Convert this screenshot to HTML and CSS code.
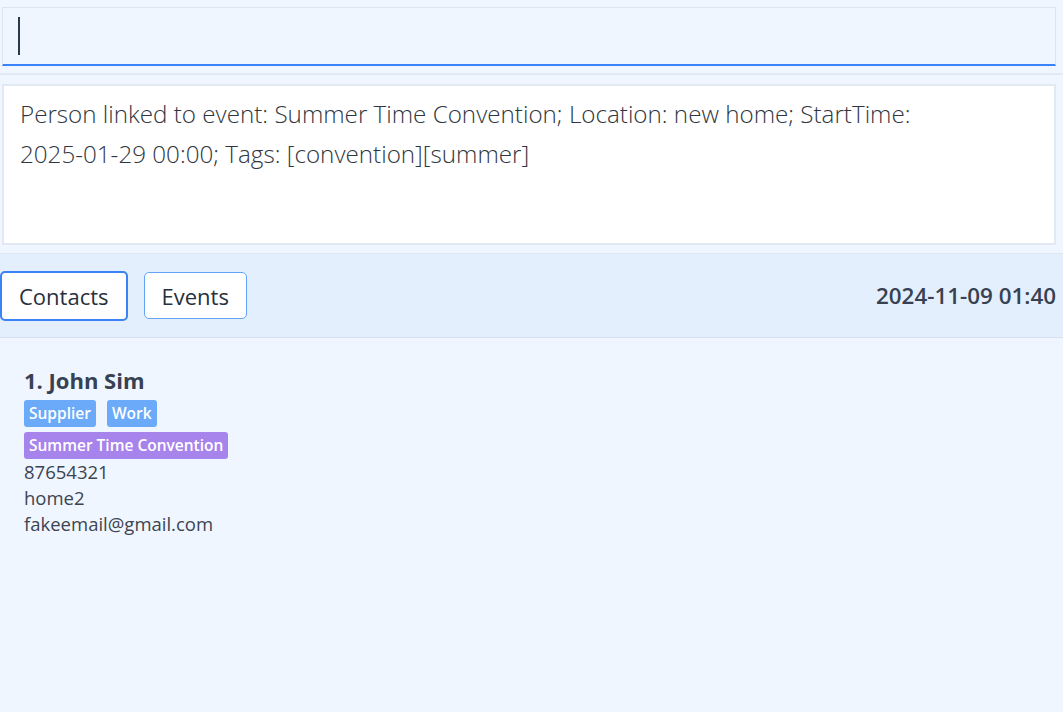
FILE: index.html
```html
<!DOCTYPE html>
<html>
<head>
<meta charset="utf-8">
<link rel="stylesheet" href="styles.css">
</head>
<body>
<div class="app">
  <section class="cmd-section">
    <div class="cmd-box"><span class="caret"></span></div>
  </section>
  <section class="result-section">
    <div class="result-box">Person linked to event: Summer Time Convention; Location: new home; StartTime: <span class="nowrap">2025-01-29</span> 00:00; Tags: [convention][summer]</div>
  </section>
  <nav class="tab-bar">
    <div class="tabs">
      <button class="tab tab-active">Contacts</button>
      <button class="tab">Events</button>
    </div>
    <div class="clock">2024-11-09 01:40</div>
  </nav>
  <main class="list">
    <div class="card">
      <div class="name">1. John Sim</div>
      <div class="tags">
        <span class="tag tag-blue">Supplier</span>
        <span class="tag tag-blue">Work</span>
      </div>
      <div class="tags tags-last">
        <span class="tag tag-purple">Summer Time Convention</span>
      </div>
      <div class="field">87654321</div>
      <div class="field">home2</div>
      <div class="field">fakeemail@gmail.com</div>
    </div>
  </main>
</div>
</body>
</html>
```
FILE: styles.css
```css
html, body {
  margin: 0;
  padding: 0;
  background: #eff6ff;
  font-family: "Open Sans", "Noto Sans", sans-serif;
  color: #374151;
}
* {
  box-sizing: border-box;
}
.app {
  display: flex;
  flex-direction: column;
  min-height: 712px;
}
.cmd-section {
  padding: 7px 7px 7px 2px;
  border-bottom: 2px solid #e2e9f2;
}
.cmd-box {
  height: 59px;
  border: 1px solid #dde6f0;
  border-bottom: 2px solid #3b82f6;
  background: #eff6ff;
  display: flex;
  align-items: center;
  padding-left: 15px;
}
.caret {
  display: block;
  width: 2px;
  height: 38px;
  background: #2b3a4a;
}
.result-section {
  padding: 9px 7px 8px 2px;
  border-bottom: 1px solid #dfe7f1;
}
.result-box {
  height: 161px;
  background: #ffffff;
  border: 2px solid #e2e9f2;
  padding: 8px 40px 0 16px;
  font-weight: 300;
  font-size: 24.2px;
  line-height: 40px;
  color: #2f3640;
}
.nowrap {
  white-space: nowrap;
}
.tab-bar {
  background: #e3effd;
  border-bottom: 1px solid #d6e1ee;
  height: 84px;
  display: flex;
  align-items: center;
  justify-content: space-between;
  padding: 0 7px 0 0;
}
.tabs {
  display: flex;
  gap: 16px;
  align-items: center;
}
.tab {
  font-family: "Open Sans", "Noto Sans", sans-serif;
  font-size: 22px;
  color: #27303c;
  background: #ffffff;
  border: 1px solid #64a4f8;
  border-radius: 5px;
  height: 47px;
  padding: 0 17px;
  cursor: pointer;
}
.tab-active {
  border: 2px solid #3b82f6;
  height: 50px;
  padding: 0 17px;
}
.clock {
  font-weight: 600;
  font-size: 22.4px;
  color: #374151;
}
.list {
  padding: 28px 24px;
}
.card {
  display: flex;
  flex-direction: column;
  align-items: flex-start;
}
.name {
  font-weight: 700;
  font-size: 22px;
  line-height: 28px;
  margin-bottom: 6px;
}
.tags {
  display: flex;
  gap: 11px;
  margin-bottom: 5px;
}
.tags-last {
  margin-bottom: 0;
}
.tag {
  color: #ffffff;
  font-weight: 600;
  font-size: 15.5px;
  line-height: 27px;
  padding: 0 5px;
  border-radius: 3px;
}
.tag-blue {
  background: #6aaaf8;
}
.tag-purple {
  background: #a784ec;
}
.field {
  font-size: 18.5px;
  line-height: 26px;
  color: #3c4451;
}
```
